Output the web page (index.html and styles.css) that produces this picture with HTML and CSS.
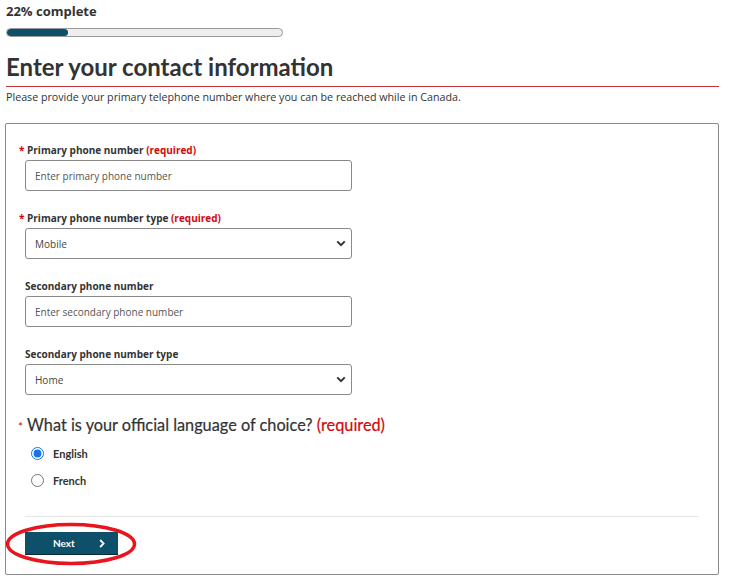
FILE: index.html
```html
<!DOCTYPE html>
<html lang="en">
<head>
    <meta charset="UTF-8">
    <meta name="viewport" content="width=device-width, initial-scale=1.0">
    <title>Enter your contact information</title>
    <link rel="stylesheet" href="styles.css">
</head>
<body>
    <div class="page">
        <div class="progress">
            <p class="progress-label">22% complete</p>
            <div class="progress-track"><div class="progress-fill" style="width: 22%"></div></div>
        </div>

        <header class="page-header">
            <h1>Enter your contact information</h1>
        </header>
        <p class="intro">Please provide your primary telephone number where you can be reached while in Canada.</p>

        <form class="card">
            <div class="field">
                <label for="primaryPhone"><span class="star">*</span> Primary phone number <span class="req">(required)</span></label>
                <input type="text" id="primaryPhone" placeholder="Enter primary phone number">
            </div>
            <div class="field">
                <label for="primaryType"><span class="star">*</span> Primary phone number type <span class="req">(required)</span></label>
                <div class="select-wrap">
                    <select id="primaryType">
                        <option>Mobile</option>
                        <option>Home</option>
                        <option>Work</option>
                    </select>
                    <svg class="chevron" viewBox="0 0 12 8"><path d="M1.5 1.5 6 6l4.5-4.5" fill="none" stroke="currentColor" stroke-width="2.4"/></svg>
                </div>
            </div>
            <div class="field">
                <label for="secondaryPhone">Secondary phone number</label>
                <input type="text" id="secondaryPhone" placeholder="Enter secondary phone number">
            </div>
            <div class="field">
                <label for="secondaryType">Secondary phone number type</label>
                <div class="select-wrap">
                    <select id="secondaryType">
                        <option>Home</option>
                        <option>Mobile</option>
                        <option>Work</option>
                    </select>
                    <svg class="chevron" viewBox="0 0 12 8"><path d="M1.5 1.5 6 6l4.5-4.5" fill="none" stroke="currentColor" stroke-width="2.4"/></svg>
                </div>
            </div>

            <fieldset class="language">
                <legend><span class="star">*</span> What is your official language of choice? <span class="req">(required)</span></legend>
                <label class="radio"><input type="radio" name="lang" checked> English</label>
                <label class="radio"><input type="radio" name="lang"> French</label>
            </fieldset>

            <div class="actions">
                <button type="submit" class="next">Next <svg class="next-arrow" viewBox="0 0 6 9"><path d="M1.2 1 4.6 4.5 1.2 8" fill="none" stroke="currentColor" stroke-width="1.8"/></svg></button>
                <svg class="highlight" viewBox="0 0 132 44"><ellipse cx="66" cy="22" rx="63.5" ry="19.5" fill="none" stroke="#e8141e" stroke-width="3.5"/></svg>
            </div>
        </form>
    </div>
</body>
</html>
```

FILE: styles.css
```css
:root {
    --font-body: 'Open Sans', 'Noto Sans', sans-serif;
    --font-title: 'Lato', 'Open Sans', sans-serif;
    --color-text: #333333;
    --color-red: #d3080c;
    --color-primary: #0e5069;
    --color-border: #8a8a8a;
}
body {
    margin: 0;
    font-family: var(--font-body);
    color: var(--color-text);
    background: #ffffff;
}
.page {
    width: 714px;
    padding: 3px 0 0 5px;
}

/* progress */
.progress-label {
    margin: 0 0 0 1px;
    font-size: 13px;
    font-weight: bold;
    line-height: 17px;
}
.progress-track {
    width: 275px;
    height: 7px;
    margin: 8px 0 0 1px;
    border: 1px solid #999;
    border-radius: 5px;
    background: #eeeeee;
    overflow: hidden;
}
.progress-fill {
    height: 100%;
    background: var(--color-primary);
    border-radius: 5px;
}

/* header */
.page-header {
    margin: 15px 0 0 1px;
    border-bottom: 1px solid #c0353a;
}
.page-header h1 {
    font-family: var(--font-title);
    font-weight: 700;
    font-size: 24px;
    line-height: 30px;
    margin: 0;
    padding-bottom: 4px;
}
.intro {
    margin: 3px 0 0 1px;
    font-size: 10.7px;
    line-height: 15px;
}

/* card */
.card {
    margin-top: 18px;
    border: 1px solid var(--color-border);
    border-radius: 2px;
    padding: 19px 20px 19px 19px;
}
.field { margin-bottom: 20px; }
.field label {
    display: block;
    font-size: 10px;
    font-weight: bold;
    line-height: 14px;
    margin-bottom: 3px;
}
.star {
    color: var(--color-red);
    margin-left: -6px;
}
.req { color: var(--color-red); }
input[type="text"], select {
    display: block;
    width: 327px;
    height: 31px;
    padding: 0 9px;
    font-family: var(--font-body);
    font-size: 10px;
    color: #444;
    border: 1px solid var(--color-border);
    border-radius: 3px;
    background: #fff;
    box-sizing: border-box;
    appearance: none;
    margin: 0;
}
input[type="text"]::placeholder { color: #555; }
.select-wrap {
    position: relative;
    width: 327px;
}
.chevron {
    position: absolute;
    right: 6px;
    top: 12px;
    width: 10px;
    height: 7px;
    color: #333;
    pointer-events: none;
}

/* language */
.language {
    border: 0;
    margin: 0;
    padding: 0;
}
.language legend {
    padding: 0;
    font-family: var(--font-title);
    font-size: 16.3px;
    line-height: 20px;
    margin-bottom: 10px;
    -webkit-text-stroke: 0.2px #333;
}
.language legend .star { font-size: 12px; margin-left: -7px; -webkit-text-stroke: 0; }
.language legend .req { -webkit-text-stroke: 0.2px var(--color-red); }
.radio {
    display: flex;
    align-items: center;
    gap: 9px;
    font-family: var(--font-title);
    font-size: 11px;
    font-weight: bold;
    line-height: 13px;
    margin: 0 0 14px 6px;
}
.radio input {
    width: 13px;
    height: 13px;
    margin: 0;
    accent-color: #1a73e8;
}

/* actions */
.actions {
    position: relative;
    margin: 15px 0 0 0;
    padding-top: 15px;
    border-top: 1px solid #e6e6e6;
}
.next {
    display: flex;
    align-items: center;
    justify-content: space-between;
    width: 93px;
    height: 23px;
    padding: 0 13px 0 28px;
    background: var(--color-primary);
    color: #fff;
    border: none;
    border-bottom: 1px solid #062a38;
    font-family: var(--font-title);
    font-weight: bold;
    font-size: 10px;
    cursor: pointer;
}
.next-arrow {
    width: 6px;
    height: 9px;
}
.highlight {
    position: absolute;
    left: -20px;
    top: 5px;
    width: 132px;
    height: 44px;
}
```
